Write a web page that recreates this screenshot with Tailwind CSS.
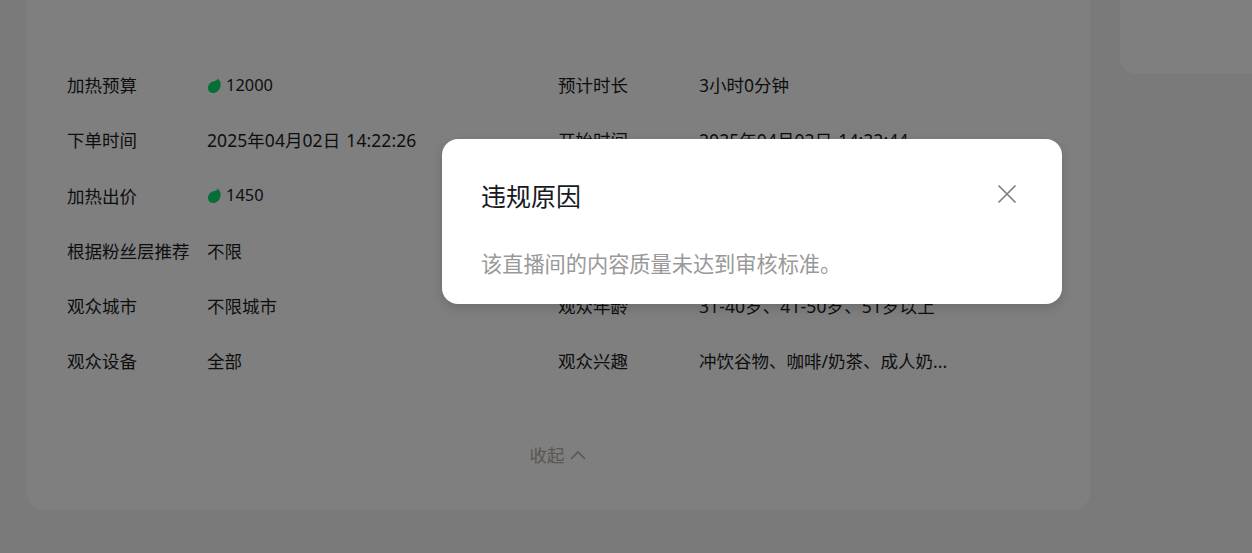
<!DOCTYPE html>
<html lang="zh-CN">
<head>
<meta charset="utf-8">
<script src="https://cdn.jsdelivr.net/npm/@tailwindcss/browser@4"></script>
</head>
<body class="relative h-[553px] w-[1252px] overflow-hidden bg-[#f5f5f5] font-['Noto_Sans','Noto_Sans_CJK_SC',sans-serif] text-[17.5px] text-[#1c1c1c]">
<div class="flex items-start pl-[27px]">
  <section class="h-[509px] w-[1063px] rounded-b-2xl bg-white pl-10 pt-[57.7px]">
    <div class="grid grid-cols-[491px_1fr] auto-rows-[55.2px]">
      <div class="flex items-center"><span class="w-[140px]">加热预算</span><span class="ml-px flex items-center gap-[5px] text-[16.4px]"><svg class="h-[15px] w-[13px]" viewBox="0 0 13 15"><path fill="#10dc70" d="M9.800 0C9.900 1 10.500 1.700 11.500 2.500C12.800 4 13 6.500 12.300 9C11.300 12.500 8.500 15 5.300 15C2 15 0 13.200 0 10.200C0 6.600 2.600 4 5.800 3.300C8 2.800 9.400 1.800 9.800 0Z"/></svg>12000</span></div>
      <div class="flex items-center"><span class="w-[141px]">预计时长</span><span>3小时0分钟</span></div>
      <div class="flex items-center"><span class="w-[140px]">下单时间</span><span class="tracking-[0.06px] [word-spacing:1.500px]">2025年04月02日 14:22:26</span></div>
      <div class="flex items-center"><span class="w-[141px]">开始时间</span><span class="tracking-[0.06px] [word-spacing:1.500px]">2025年04月02日 14:22:44</span></div>
      <div class="flex items-center"><span class="w-[140px]">加热出价</span><span class="ml-px flex items-center gap-[5px] text-[16.4px]"><svg class="h-[15px] w-[13px]" viewBox="0 0 13 15"><path fill="#10dc70" d="M9.800 0C9.900 1 10.500 1.700 11.500 2.500C12.800 4 13 6.500 12.300 9C11.300 12.500 8.500 15 5.300 15C2 15 0 13.200 0 10.200C0 6.600 2.600 4 5.800 3.300C8 2.800 9.400 1.800 9.800 0Z"/></svg>1450</span></div>
      <div class="flex items-center"><span class="w-[141px]"></span></div>
      <div class="flex items-center"><span class="w-[140px]">根据粉丝层推荐</span><span>不限</span></div>
      <div class="flex items-center"><span class="w-[141px]"></span></div>
      <div class="flex items-center"><span class="w-[140px]">观众城市</span><span>不限城市</span></div>
      <div class="flex items-center"><span class="w-[141px]">观众年龄</span><span class="tracking-[0.1px]">31-40岁、41-50岁、51岁以上</span></div>
      <div class="flex items-center"><span class="w-[140px]">观众设备</span><span>全部</span></div>
      <div class="flex items-center"><span class="w-[141px]">观众兴趣</span><span>冲饮谷物、咖啡/奶茶、成人奶...</span></div>
    </div>
    <button class="mx-auto mt-[52.800px] flex items-center gap-[3px] pr-10 text-[#b5aca2]">收起<svg class="h-4 w-[20px]" viewBox="0 0 20 16" fill="none" stroke="#b0b0b0" stroke-width="1.6"><path d="M3 12l7-7 7 7"/></svg></button>
  </section>
  <aside class="ml-[30px] h-[74px] flex-1 rounded-bl-2xl bg-white"></aside>
</div>
<div class="absolute inset-0 bg-black/50"></div>
<div role="dialog" class="absolute left-[442px] top-[139px] h-[165px] w-[620px] rounded-2xl bg-white px-[39px] pt-[39px] shadow-[0_4px_12px_rgba(0,0,0,0.15)]">
  <div class="flex items-start justify-between">
    <h2 class="text-[25px] leading-9 font-normal text-[#161823]">违规原因</h2>
    <svg class="mr-[4px] mt-[4px] h-6 w-6" viewBox="0 0 24 24" fill="none" stroke="#7f7f7f" stroke-width="1.7"><path d="M3.500 3.500l17 17M20.500 3.500l-17 17"/></svg>
  </div>
  <p class="mt-[34px] text-[21.200px] leading-8 text-[#999]">该直播间的内容质量未达到审核标准。</p>
</div>
</body>
</html>
